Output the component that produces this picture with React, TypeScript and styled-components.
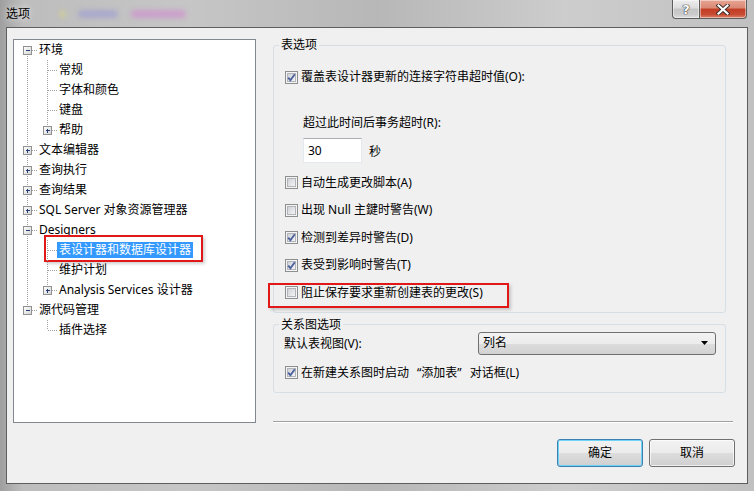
import React, { useId } from 'react';
import styled, { createGlobalStyle } from 'styled-components';

const Global = createGlobalStyle`
  html, body { margin: 0; padding: 0; }
  body {
    width: 754px; height: 491px; overflow: hidden; background: #b8b8b8;
    font-family: "Noto Sans", "Noto Sans CJK SC", sans-serif; font-size: 12px; color: #000;
  }
  * { box-sizing: border-box; }
`;

const Window = styled.div`
  width: 754px; height: 491px; display: flex; flex-direction: column;
  background: linear-gradient(90deg, #9f9f9f 0%, #bdbdbd 3%, #c6c6c6 25%, #b7b7b7 50%, #cdcdcd 75%, #c0c0c0 100%);
`;

const TitleBar = styled.div`
  height: 27px; display: flex; align-items: flex-start; padding-left: 6px;
`;

const TitleText = styled.span`
  line-height: 27px; font-size: 12px; color: #000;
  text-shadow: 0 0 6px rgba(255, 255, 255, 0.9);
`;

const Blur = styled.span<{ $w: number; $ml: number; $c: string }>`
  display: block; margin-top: 10px; margin-left: ${p => p.$ml}px; width: ${p => p.$w}px; height: 8px;
  background: ${p => p.$c}; filter: blur(2.5px); border-radius: 4px;
`;

const Caption = styled.div`
  margin-left: auto; margin-right: 7px; display: flex;
`;

const CapBtn = styled.div<{ $close?: boolean }>`
  height: 19px; width: ${p => (p.$close ? 47 : 28)}px;
  display: flex; align-items: center; justify-content: center;
  border: 1px solid #5c5c5c; border-top: none;
  border-radius: ${p => (p.$close ? '0 0 4px 0' : '0 0 0 4px')};
  ${p => (p.$close ? 'border-left: none;' : '')}
  background: ${p =>
    p.$close
      ? 'linear-gradient(#e8a493 0%, #d98873 45%, #c23d24 50%, #c74a31 80%, #dc846d 100%)'
      : 'linear-gradient(#eeeeee 0%, #dcdcdc 45%, #c5c5c5 50%, #cbcbcb 80%, #dedede 100%)'};
  box-shadow: inset 0 0 0 1px rgba(255, 255, 255, 0.45);
`;

const HelpGlyph = styled.span`
  font-family: "DejaVu Sans", sans-serif; font-weight: bold; font-size: 13px; color: #fff; line-height: 1;
  text-shadow: 0 0 1px #333, 0 0 1px #333, 0 0 1px #333;
`;

const Client = styled.div`
  flex: 1; margin: 0 6px 7px 6px; background: #f0f0f0; border: 1px solid #5e5e5e;
  display: flex; flex-direction: column; padding: 11px 12px 0 6px;
`;

const MainRow = styled.div`
  display: flex; height: 384px;
`;

const Tree = styled.div`
  width: 243px; height: 384px; background: #fff; border: 1px solid #828790;
  padding-left: 3px; overflow: visible; flex-shrink: 0;
`;

const TreeRowEl = styled.div`
  position: relative; height: 20px; display: flex; align-items: center; white-space: nowrap;
`;

const TreeLabel = styled.span<{ $sel?: boolean }>`
  line-height: 16px; padding: 0 2px;
  background: ${p => (p.$sel ? '#3399ff' : 'transparent')};
  color: ${p => (p.$sel ? '#fff' : '#000')};
`;

const Marker = styled.div<{ $l: number; $t: number; $w: number; $h: number }>`
  position: absolute; left: ${p => p.$l}px; top: ${p => p.$t}px; width: ${p => p.$w}px; height: ${p => p.$h}px;
  border: 2px solid #e01818; pointer-events: none;
  box-shadow: 2px 2px 3px rgba(0, 0, 0, 0.18);
`;

const RightCol = styled.div`
  margin-left: 17px; width: 460px; display: flex; flex-direction: column;
`;

const Group = styled.fieldset<{ $mt: number; $pb: number }>`
  margin: ${p => p.$mt}px 0 0 0; width: 453px; min-width: 0;
  border: 1px solid #d5dfe5; border-radius: 3px;
  padding: 0 9px ${p => p.$pb}px 10px;
  display: flex; flex-direction: column;
`;

const Legend = styled.legend`
  padding: 0 2px; margin-left: -5px; line-height: 16px; font-size: 12px;
`;

const CheckRow = styled.div<{ $h?: number; $mt?: number }>`
  position: relative; display: flex; align-items: center; gap: 3px;
  height: ${p => p.$h ?? 20}px; margin-top: ${p => p.$mt ?? 0}px; padding-left: 1px;
  line-height: 16px; white-space: nowrap;
`;

const Quote = styled.span<{ $open?: boolean }>`
  margin-left: ${p => (p.$open ? 8 : 0)}px; margin-right: ${p => (p.$open ? 0 : 8)}px;
`;

const SubLabel = styled.div`
  margin-top: 26px; height: 20px; line-height: 20px; padding-left: 19px;
`;

const InputRow = styled.div`
  margin-top: 5px; height: 25px; padding-left: 19px; display: flex; align-items: center; gap: 7px;
`;

const NumBox = styled.div`
  width: 59px; height: 25px; background: #fff;
  border: 1px solid #e3e9ef; border-top-color: #abadb3;
  display: flex; align-items: center; padding-left: 4px; line-height: 16px;
`;

const CheckList = styled.div`
  margin-top: 6px; display: flex; flex-direction: column;
`;

const DropRow = styled.div`
  margin-top: -1px; height: 23px; display: flex; align-items: center; justify-content: space-between;
`;

const Select = styled.div`
  width: 238px; height: 23px; border: 1px solid #707070; border-radius: 3px;
  background: linear-gradient(#f3f3f3 0%, #ececec 50%, #dddddd 51%, #d2d2d2 100%);
  display: flex; align-items: center; justify-content: space-between; padding: 0 6px 0 4px;
  line-height: 16px;
`;

const Separator = styled.div`
  margin-top: auto; height: 2px; border-top: 1px solid #a0a0a0; border-bottom: 1px solid #ffffff;
`;

const ButtonRow = styled.div`
  margin-top: 16px; display: flex; justify-content: flex-end; gap: 6px;
`;

const Button = styled.div<{ $def?: boolean }>`
  width: 86px; height: 28px; border-radius: 3px;
  border: 1px solid ${p => (p.$def ? '#3c7fb1' : '#707070')};
  box-shadow: ${p => (p.$def ? 'inset 0 0 0 1px #6fd3f7' : 'inset 0 0 0 1px rgba(255,255,255,0.7)')};
  background: linear-gradient(#f2f2f2 0%, #ebebeb 50%, #dddddd 51%, #cfcfcf 100%);
  display: flex; align-items: center; justify-content: center; line-height: 16px;
`;

const CheckBox: React.FC<{ checked?: boolean }> = ({ checked }) => {
  const id = useId().replace(/:/g, '');
  return (
    <svg width="13" height="13" viewBox="0 0 13 13" style={{ flexShrink: 0 }}>
      <defs>
        <linearGradient id={`cb${id}`} x1="0" y1="0" x2="1" y2="1">
          <stop offset="0" stopColor="#cbcfd5" />
          <stop offset="1" stopColor="#f7f7f7" />
        </linearGradient>
      </defs>
      <rect x="0.5" y="0.5" width="12" height="12" fill="#f4f4f4" stroke="#8e8f8f" />
      <rect x="2.5" y="2.5" width="8" height="8" fill={`url(#cb${id})`} stroke="#b1b5ba" />
      {checked && (
        <path d="M3.2 6.6 L5.4 9.2 L9.8 3.2" fill="none" stroke="#4a5f9c" strokeWidth="1.8" strokeLinejoin="miter" />
      )}
    </svg>
  );
};

type Node = {
  label: string;
  level: number;
  anc: boolean[];
  top: boolean;
  bottom: boolean;
  exp?: '+' | '-';
  sel?: boolean;
};

const nodes: Node[] = [
  { label: '环境', level: 0, anc: [], top: false, bottom: true, exp: '-' },
  { label: '常规', level: 1, anc: [true], top: true, bottom: true },
  { label: '字体和颜色', level: 1, anc: [true], top: true, bottom: true },
  { label: '键盘', level: 1, anc: [true], top: true, bottom: true },
  { label: '帮助', level: 1, anc: [true], top: true, bottom: false, exp: '+' },
  { label: '文本编辑器', level: 0, anc: [], top: true, bottom: true, exp: '+' },
  { label: '查询执行', level: 0, anc: [], top: true, bottom: true, exp: '+' },
  { label: '查询结果', level: 0, anc: [], top: true, bottom: true, exp: '+' },
  { label: 'SQL Server 对象资源管理器', level: 0, anc: [], top: true, bottom: true, exp: '+' },
  { label: 'Designers', level: 0, anc: [], top: true, bottom: true, exp: '-' },
  { label: '表设计器和数据库设计器', level: 1, anc: [true], top: true, bottom: true, sel: true },
  { label: '维护计划', level: 1, anc: [true], top: true, bottom: true },
  { label: 'Analysis Services 设计器', level: 1, anc: [true], top: true, bottom: false, exp: '+' },
  { label: '源代码管理', level: 0, anc: [], top: true, bottom: false, exp: '-' },
  { label: '插件选择', level: 1, anc: [false], top: true, bottom: false },
];

const Gutter: React.FC<{ n: Node }> = ({ n }) => {
  const id = useId().replace(/:/g, '');
  const w = 20 * (n.level + 1);
  const cx = 20 * n.level + 10.5;
  const dot = { stroke: '#a0a0a0', strokeWidth: 1, strokeDasharray: '1 1', shapeRendering: 'crispEdges' as const };
  return (
    <svg width={w} height={20} viewBox={`0 0 ${w} 20`} style={{ flexShrink: 0 }}>
      <defs>
        <linearGradient id={`ex${id}`} x1="0" y1="0" x2="1" y2="1">
          <stop offset="0" stopColor="#ffffff" />
          <stop offset="1" stopColor="#d4d4d4" />
        </linearGradient>
      </defs>
      {n.anc.map((a, i) => (a ? <line key={i} x1={20 * i + 10.5} y1={0} x2={20 * i + 10.5} y2={20} {...dot} /> : null))}
      {n.top && <line x1={cx} y1={0} x2={cx} y2={10} {...dot} />}
      {n.bottom && <line x1={cx} y1={10} x2={cx} y2={20} {...dot} />}
      <line x1={cx} y1={10.5} x2={20 * n.level + 20} y2={10.5} {...dot} />
      {n.exp && (
        <g>
          <rect x={20 * n.level + 6.5} y={6.5} width={8} height={8} fill={`url(#ex${id})`} stroke="#919191" shapeRendering="crispEdges" />
          <line x1={20 * n.level + 8.5} y1={10.5} x2={20 * n.level + 13} y2={10.5} stroke="#223e74" strokeWidth="1" shapeRendering="crispEdges" />
          {n.exp === '+' && (
            <line x1={cx} y1={8.5} x2={cx} y2={13} stroke="#223e74" strokeWidth="1" shapeRendering="crispEdges" />
          )}
        </g>
      )}
    </svg>
  );
};

const TreeRow: React.FC<{ n: Node }> = ({ n }) => (
  <TreeRowEl>
    <Gutter n={n} />
    <TreeLabel $sel={n.sel}>{n.label}</TreeLabel>
    {n.sel && <Marker $l={27} $t={-5} $w={159} $h={27} />}
  </TreeRowEl>
);

const CloseIcon = () => (
  <svg width="14" height="11" viewBox="0 0 14 11">
    <path d="M2.5 1.5 L11.5 9.5 M11.5 1.5 L2.5 9.5" stroke="#3a2a2a" strokeWidth="4" strokeLinecap="square" />
    <path d="M2.5 1.5 L11.5 9.5 M11.5 1.5 L2.5 9.5" stroke="#ffffff" strokeWidth="2.2" strokeLinecap="square" />
  </svg>
);

const DropArrow = () => (
  <svg width="8" height="5" viewBox="0 0 8 5">
    <path d="M0 0 H7 L3.5 4 Z" fill="#000" />
  </svg>
);

const options: { label: string; checked: boolean; marked?: boolean }[] = [
  { label: '自动生成更改脚本(A)', checked: false },
  { label: '出现 Null 主鍵时警告(W)', checked: false },
  { label: '检测到差异时警告(D)', checked: true },
  { label: '表受到影响时警告(T)', checked: true },
  { label: '阻止保存要求重新创建表的更改(S)', checked: false, marked: true },
];

export default function App() {
  return (
    <>
      <Global />
      <Window>
        <TitleBar>
          <TitleText>选项</TitleText>
          <Blur $w={5} $ml={30} $c="rgba(220,215,120,0.6)" />
          <Blur $w={40} $ml={13} $c="rgba(150,150,215,0.55)" />
          <Blur $w={55} $ml={13} $c="rgba(210,130,210,0.55)" />
          <Caption>
            <CapBtn>
              <HelpGlyph>?</HelpGlyph>
            </CapBtn>
            <CapBtn $close>
              <CloseIcon />
            </CapBtn>
          </Caption>
        </TitleBar>
        <Client>
          <MainRow>
            <Tree>
              {nodes.map((n, i) => (
                <TreeRow key={i} n={n} />
              ))}
            </Tree>
            <RightCol>
              <Group $mt={-2} $pb={5}>
                <Legend>表选项</Legend>
                <CheckRow $mt={14}>
                  <CheckBox checked />
                  <span>覆盖表设计器更新的连接字符串超时值(O):</span>
                </CheckRow>
                <SubLabel>超过此时间后事务超时(R):</SubLabel>
                <InputRow>
                  <NumBox>30</NumBox>
                  <span>秒</span>
                </InputRow>
                <CheckList>
                  {options.map((o, i) => (
                    <CheckRow key={i} $h={27.5}>
                      <CheckBox checked={o.checked} />
                      <span>{o.label}</span>
                      {o.marked && <Marker $l={-16} $t={4} $w={241} $h={25} />}
                    </CheckRow>
                  ))}
                </CheckList>
              </Group>
              <Group $mt={4} $pb={9}>
                <Legend>关系图选项</Legend>
                <DropRow>
                  <span>默认表视图(V):</span>
                  <Select>
                    <span>列名</span>
                    <DropArrow />
                  </Select>
                </DropRow>
                <CheckRow $mt={8}>
                  <CheckBox checked />
                  <span>
                    在新建关系图时启动<Quote $open>“</Quote>添加表<Quote>”</Quote>对话框(L)
                  </span>
                </CheckRow>
              </Group>
              <Separator />
            </RightCol>
          </MainRow>
          <ButtonRow>
            <Button $def>确定</Button>
            <Button>取消</Button>
          </ButtonRow>
        </Client>
      </Window>
    </>
  );
}
